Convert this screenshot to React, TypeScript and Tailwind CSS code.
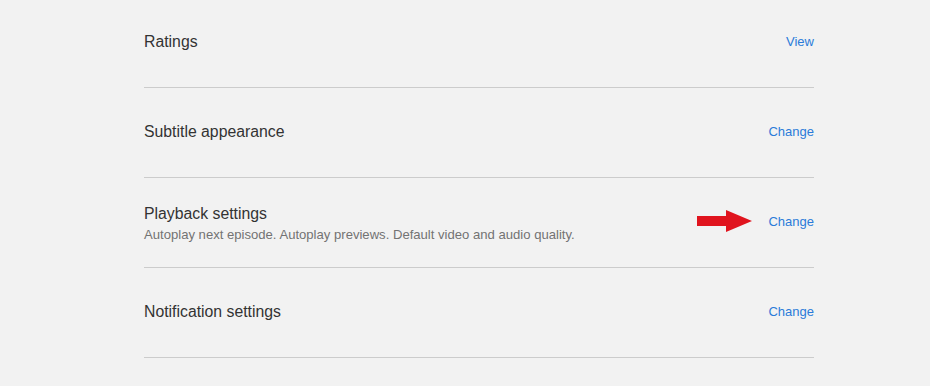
import React from 'react';

type Row = { title: string; desc?: string; action: string; arrow?: boolean };

const rows: Row[] = [
  { title: 'Ratings', action: 'View' },
  { title: 'Subtitle appearance', action: 'Change' },
  {
    title: 'Playback settings',
    desc: 'Autoplay next episode. Autoplay previews. Default video and audio quality.',
    action: 'Change',
    arrow: true,
  },
  { title: 'Notification settings', action: 'Change' },
];

function RedArrow() {
  return (
    <svg width="55" height="24" viewBox="0 0 55 24" className="absolute right-[62px] top-1/2 -translate-y-1/2">
      <polygon points="0,7 29,7 29,1 55,12 29,23 29,17 0,17" fill="#e0141e" />
    </svg>
  );
}

export default function App() {
  return (
    <div className="min-h-[388px] w-full bg-[#f2f2f2] font-['Liberation_Sans',Arial,sans-serif]">
      <div className="ml-[144px] w-[670px] -mt-[2px]">
        {rows.map((r) => (
          <div key={r.title} className="flex h-[90px] items-center justify-between border-b border-[#cccccc]">
            {r.desc ? (
              <div className="flex flex-col gap-[3px] translate-y-[1px]">
                <span className="text-[15.8px] leading-5 text-[#333333]">{r.title}</span>
                <span className="text-[13.1px] leading-4 text-[#737373]">{r.desc}</span>
              </div>
            ) : (
              <div className="-translate-y-[1px]">
                <span className="text-[15.8px] leading-5 text-[#333333]">{r.title}</span>
              </div>
            )}
            <div className="relative -translate-y-[2px]">
              {r.arrow && <RedArrow />}
              <a href="#" className="text-[13px] text-[#2b7bd9]">{r.action}</a>
            </div>
          </div>
        ))}
      </div>
    </div>
  );
}
